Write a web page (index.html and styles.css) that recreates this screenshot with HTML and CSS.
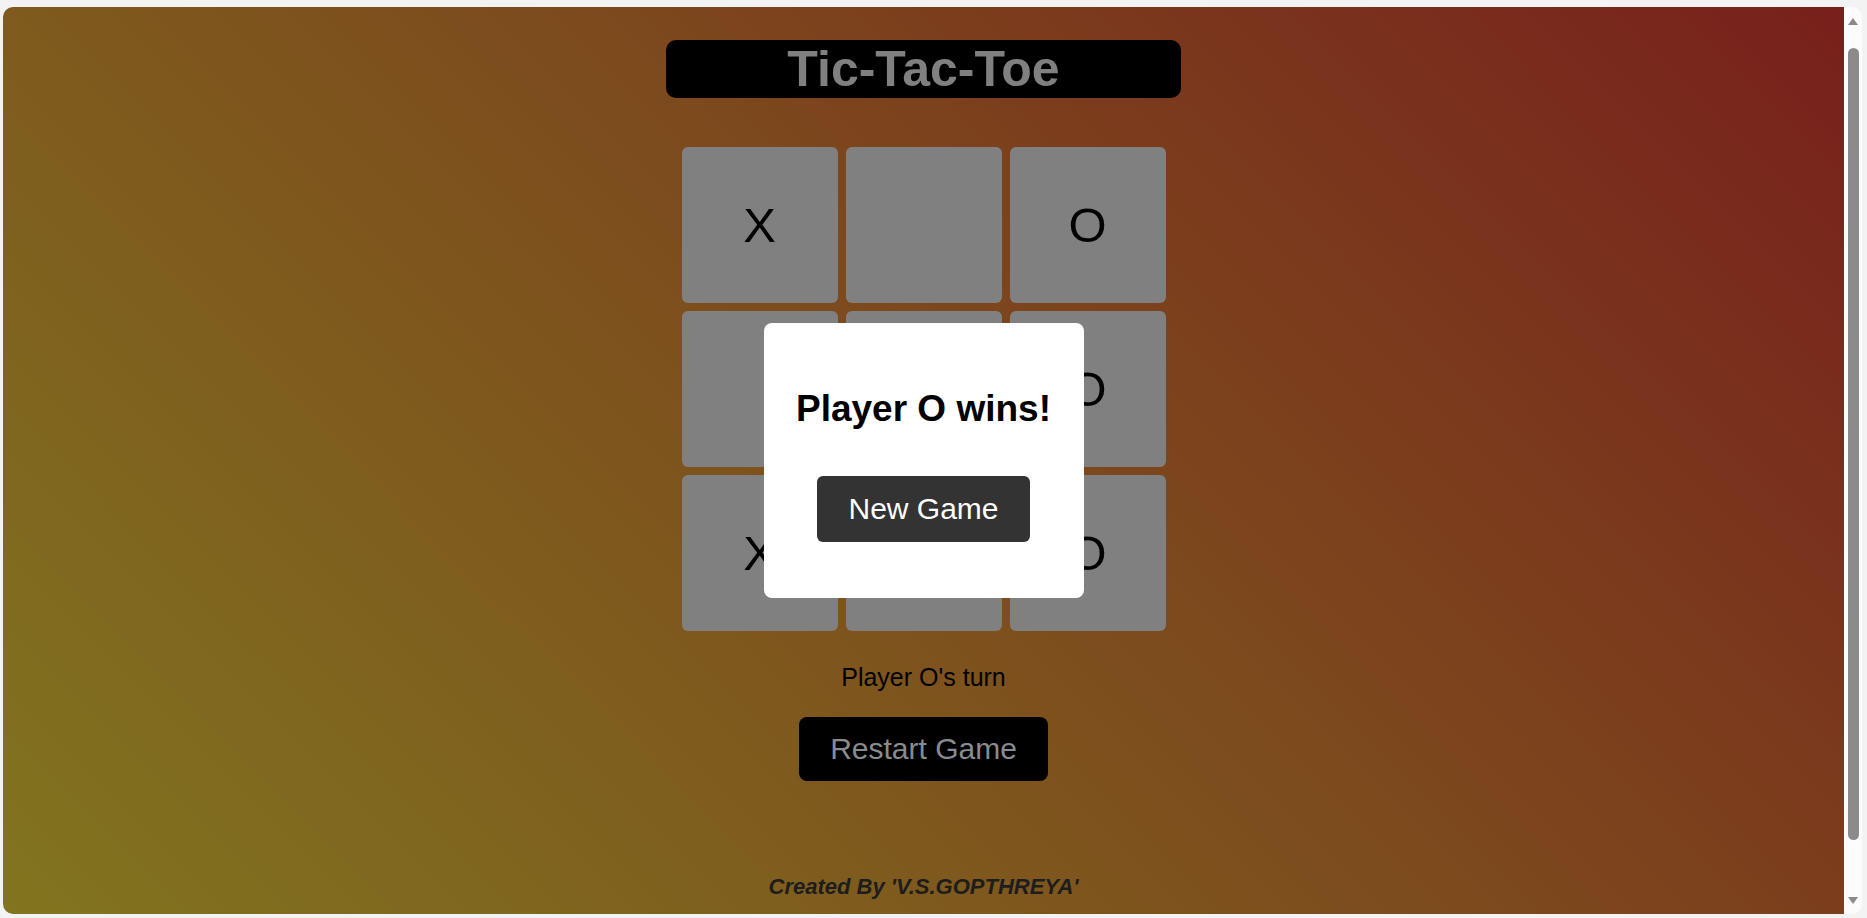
FILE: index.html
```html
<!DOCTYPE html>
<html lang="en">
<head>
<meta charset="utf-8">
<title>Tic-Tac-Toe</title>
<link rel="stylesheet" href="styles.css">
</head>
<body>
<div class="window">
  <main class="viewport">
    <h1 class="title">Tic-Tac-Toe</h1>
    <div class="board">
      <div class="cell">X</div>
      <div class="cell"></div>
      <div class="cell">O</div>
      <div class="cell"></div>
      <div class="cell"></div>
      <div class="cell">O</div>
      <div class="cell">X</div>
      <div class="cell"></div>
      <div class="cell">O</div>
    </div>
    <p class="status">Player O's turn</p>
    <button class="restart">Restart Game</button>
    <footer class="credit">Created By 'V.S.GOPTHREYA'</footer>

    <div class="overlay">
      <div class="modal">
        <h2 class="modal-title">Player O wins!</h2>
        <button class="new-game">New Game</button>
      </div>
    </div>
  </main>
  <div class="scrollbar">
    <span class="arrow-up"></span>
    <span class="thumb"></span>
    <span class="arrow-down"></span>
  </div>
</div>
</body>
</html>
```
FILE: styles.css
```css
html, body {
  margin: 0;
  height: 100%;
  overflow: hidden;
}

body {
  background: #f3f3f3;
  font-family: "Liberation Sans", Arial, sans-serif;
  box-sizing: border-box;
  padding: 7px 5px 4px 3px;
}

.window {
  height: 100%;
  display: flex;
  border-radius: 10px;
  overflow: hidden;
  background: #fcfcfc;
}

.viewport {
  position: relative;
  flex: 1;
  display: flex;
  flex-direction: column;
  align-items: center;
  padding-top: 33px;
  background: linear-gradient(45deg, #81751f 0%, #7d4d1d 50%, #78201c 100%);
}

.title {
  margin: 0;
  width: 515px;
  height: 58px;
  line-height: 58px;
  text-align: center;
  background: #000;
  color: #808080;
  font-size: 50px;
  font-weight: bold;
  border-radius: 10px;
}

.board {
  margin-top: 49px;
  display: grid;
  grid-template-columns: repeat(3, 156px);
  grid-auto-rows: 156px;
  gap: 8px;
}

.cell {
  background: #808080;
  border-radius: 6px;
  display: flex;
  align-items: center;
  justify-content: center;
  font-size: 49px;
  color: #000;
}

.status {
  margin: 32px 0 0;
  font-size: 25px;
  line-height: 29px;
  color: #000;
}

.restart {
  margin-top: 25px;
  border: none;
  border-radius: 8px;
  background: #000;
  color: #888b90;
  font-family: "Liberation Sans", Arial, sans-serif;
  font-size: 30px;
  line-height: 34px;
  padding: 15px 31px;
}

.credit {
  margin-top: 93px;
  font-size: 22px;
  line-height: 25px;
  font-weight: bold;
  font-style: italic;
  color: #1d1d1d;
}

.overlay {
  position: absolute;
  inset: 0;
  display: flex;
  align-items: center;
  justify-content: center;
}

.modal {
  width: 320px;
  height: 275px;
  box-sizing: border-box;
  padding-top: 65px;
  background: #fff;
  border-radius: 8px;
  display: flex;
  flex-direction: column;
  align-items: center;
}

.modal-title {
  margin: 0 0 47px;
  font-size: 37px;
  line-height: 41px;
  font-weight: bold;
  color: #000;
}

.new-game {
  border: none;
  border-radius: 6px;
  background: #333;
  color: #fff;
  font-family: "Liberation Sans", Arial, sans-serif;
  font-size: 30px;
  line-height: 34px;
  padding: 16px 31px;
}

.scrollbar {
  width: 18px;
  display: flex;
  flex-direction: column;
  align-items: center;
  padding: 11px 0 10px;
  box-sizing: border-box;
}

.arrow-up {
  width: 0;
  height: 0;
  border-left: 5.5px solid transparent;
  border-right: 5.5px solid transparent;
  border-bottom: 7px solid #8a8a8a;
}

.thumb {
  margin-top: 23px;
  width: 11px;
  height: 792px;
  border-radius: 6px;
  background: #8b8b8b;
}

.arrow-down {
  margin-top: auto;
  width: 0;
  height: 0;
  border-left: 5.5px solid transparent;
  border-right: 5.5px solid transparent;
  border-top: 7px solid #8a8a8a;
}
```
